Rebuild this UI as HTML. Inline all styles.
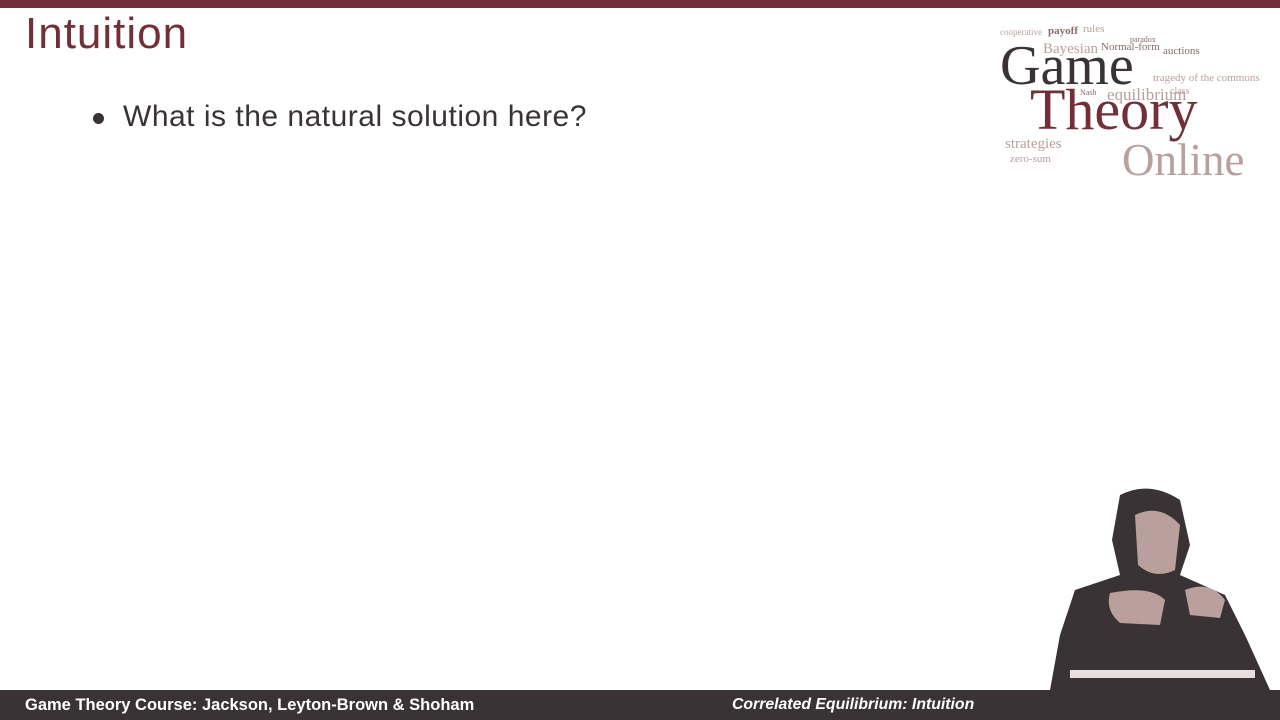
<!DOCTYPE html>
<html><head><meta charset="utf-8"><style>
body{margin:0;width:1280px;height:720px;position:relative;overflow:hidden;background:#fff;font-family:"Liberation Sans",sans-serif}
.top{position:absolute;left:0;top:0;width:1280px;height:8px;background:#722f37}
.bot{position:absolute;left:0;top:690px;width:1280px;height:30px;background:#3a3336;color:#fff;font-weight:bold}
h1{position:absolute;left:25px;top:9px;margin:0;font-size:44px;font-weight:normal;color:#722f37;letter-spacing:1px}
.b{position:absolute;left:93px;top:100px;font-size:30px;color:#3a3336;letter-spacing:0.5px}
.b:before{content:"";position:absolute;left:0;top:13px;width:11px;height:11px;border-radius:50%;background:#3a3336}
.b span{margin-left:30px}
.w{position:absolute;font-family:"Liberation Serif",serif;white-space:nowrap}
</style></head><body>
<div class="top"></div>
<h1>Intuition</h1>
<div class="b"><span>What is the natural solution here?</span></div>
<div class="w" style="left:1000px;top:27px;font-size:9px;color:#b9a09d">cooperative</div>
<div class="w" style="left:1048px;top:25px;font-size:11px;color:#8a6a6a;font-weight:bold">payoff</div>
<div class="w" style="left:1083px;top:23px;font-size:11px;color:#b9a09d">rules</div>
<div class="w" style="left:1130px;top:35px;font-size:8px;color:#8a6a6a">paradox</div>
<div class="w" style="left:1043px;top:41px;font-size:15px;color:#b9a09d">Bayesian</div>
<div class="w" style="left:1101px;top:41px;font-size:11px;color:#8a6a6a">Normal-form</div>
<div class="w" style="left:1163px;top:45px;font-size:11px;color:#8a6a6a">auctions</div>
<div class="w" style="left:1000px;top:38px;font-size:56px;color:#3a3336;line-height:1">Game</div>
<div class="w" style="left:1153px;top:72px;font-size:11px;color:#b9a09d">tragedy of the commons</div>
<div class="w" style="left:1107px;top:85px;font-size:17px;color:#b9a09d">equilibrium</div>
<div class="w" style="left:1170px;top:86px;font-size:10px;color:#b9a09d">class</div>
<div class="w" style="left:1080px;top:88px;font-size:8px;color:#8a6a6a">Nash</div>
<div class="w" style="left:1030px;top:81px;font-size:58px;color:#722f37;line-height:1">Theory</div>
<div class="w" style="left:1005px;top:136px;font-size:15px;color:#b9a09d">strategies</div>
<div class="w" style="left:1010px;top:153px;font-size:11px;color:#b9a09d">zero-sum</div>
<div class="w" style="left:1122px;top:138px;font-size:45px;color:#b9a09d;line-height:1">Online</div>
<svg style="position:absolute;left:1040px;top:485px" width="240" height="205" viewBox="0 0 240 205">
<path d="M80 10 Q110 -5 140 15 L150 60 L140 90 L185 110 L205 150 L230 205 L10 205 L20 150 L35 105 L80 90 L72 55 Z" fill="#3a3336"/>
<path d="M95 30 Q120 18 140 40 L135 85 Q115 95 98 80 Z" fill="#b9a09d"/>
<path d="M70 108 Q110 100 125 115 L120 140 L80 138 Q65 125 70 108Z" fill="#b9a09d"/>
<path d="M145 105 Q170 95 185 115 L180 133 L150 130 Z" fill="#b9a09d"/>
<rect x="30" y="185" width="185" height="8" fill="#e8dedd"/>
</svg>
<div class="bot"><span style="position:absolute;left:25px;top:6px;font-size:16.5px">Game Theory Course: Jackson, Leyton-Brown &amp; Shoham</span><span style="position:absolute;left:732px;top:6px;font-style:italic;font-size:15.8px">Correlated Equilibrium: Intuition</span></div>
</body></html>
